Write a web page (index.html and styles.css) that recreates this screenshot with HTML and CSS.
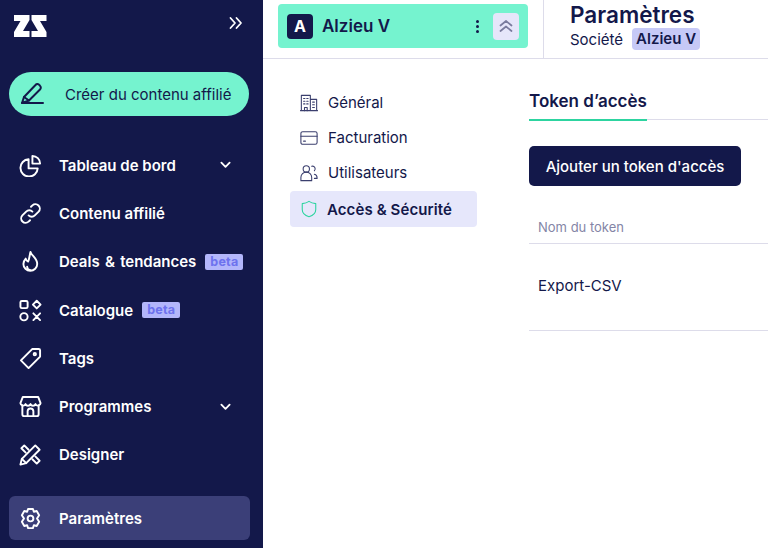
FILE: index.html
```html
<!DOCTYPE html>
<html lang="fr">
<head>
    <meta charset="UTF-8">
    <meta name="viewport" content="width=device-width, initial-scale=1.0">
    <title>Paramètres</title>
    <link rel="stylesheet" href="styles.css">
</head>
<body>
    <div class="app">
        <aside class="sidebar">
            <div class="sidebar-top">
                <svg class="logo" width="33" height="22" viewBox="0 0 33 22" fill="#fff">
                    <polygon points="0,0 15.500,0 15.500,5 9,16 15.500,16 15.500,22 0,22 0,17 6.500,6 0,6"/>
                    <polygon points="17.500,0 32.500,0 32.500,6 26,6 32.500,17 32.500,22 17.500,22 17.500,16 24,16 17.500,5"/>
                </svg>
                <svg class="collapse" width="14" height="14" viewBox="0 0 14 14" fill="none" stroke="#fff" stroke-width="1.800" stroke-linecap="round" stroke-linejoin="round">
                    <path d="M1.500 2l4.500 5-4.500 5M7.500 2l4.500 5-4.500 5"/>
                </svg>
            </div>
            <a class="create-btn">
                <svg width="24" height="24" viewBox="0 0 24 24" fill="none" stroke="#13184a" stroke-width="2" stroke-linecap="round" stroke-linejoin="round">
                    <path d="M2 21l2-6L15.500 3a2.500 2.500 0 0 1 4 0.200l.6.700a2.500 2.500 0 0 1 -.1 3.600L9 18.500z"/>
                    <path d="M4 15l5 3.500M2 21h21"/>
                </svg>
                <span>Créer du contenu affilié</span>
            </a>
            <nav class="nav">
                <a class="nav-item">
                    <svg class="nav-icon" viewBox="0 0 24 24"><path d="M10 5.500a9 9 0 1 0 9.500 9.500H10z"/><path d="M14 2a8 8 0 0 1 8 8h-8z"/></svg>
                    <span>Tableau de bord</span>
                    <svg class="chevron" viewBox="0 0 12 8"><path d="M1.500 1.500L6 6l4.500-4.500"/></svg>
                </a>
                <a class="nav-item">
                    <svg class="nav-icon" viewBox="0 0 24 24"><path d="M10 14a4.500 4.500 0 0 0 6.500 0l4-4a4.600 4.600 0 0 0-6.500-6.500l-1.500 1.500"/><path d="M14 10a4.500 4.500 0 0 0-6.500 0l-4 4a4.600 4.600 0 0 0 6.500 6.500l1.500-1.500"/></svg>
                    <span>Contenu affilié</span>
                </a>
                <a class="nav-item">
                    <svg class="nav-icon" viewBox="0 0 24 24"><path d="M12 2c1 4 7 6.500 7 12.500a7.200 7.200 0 0 1-14.400 0c0-2.500 1-4 2.400-5.500.3 1.500 1 2.500 2.500 3C11 9 11 5 12 2z"/><path d="M12 21c-2 0-3.500-1.500-3.500-3.500"/></svg>
                    <span class="nav-label-wide">Deals &amp; tendances</span>
                    <span class="beta">beta</span>
                </a>
                <a class="nav-item">
                    <svg class="nav-icon" viewBox="0 0 24 24"><rect x="1.500" y="2" width="7.500" height="7.500" rx="1.500"/><path d="M18.500 1.800l4 4-4 4-4-4z"/><circle cx="5.200" cy="18.500" r="3.800"/><path d="M15 15l7 7M22 15l-7 7"/></svg>
                    <span>Catalogue</span>
                    <span class="beta">beta</span>
                </a>
                <a class="nav-item">
                    <svg class="nav-icon" viewBox="0 0 24 24"><path d="M14 2h6.500A1.500 1.500 0 0 1 22 3.500V10L10 22 2 14z"/><circle cx="16.500" cy="7.500" r="1.200"/></svg>
                    <span>Tags</span>
                </a>
                <a class="nav-item">
                    <svg class="nav-icon" viewBox="0 0 24 24"><path d="M4 2h16l2.500 6.500a2.800 2.800 0 0 1-5.300 1 2.800 2.800 0 0 1-5.200 0 2.800 2.800 0 0 1-5.200 0 2.800 2.800 0 0 1-5.300-1z"/><path d="M3.500 11v9a2 2 0 0 0 2 2h13a2 2 0 0 0 2-2v-9"/><path d="M9 22v-5a3 3 0 0 1 6 0v5"/></svg>
                    <span>Programmes</span>
                    <svg class="chevron" viewBox="0 0 12 8"><path d="M1.500 1.500L6 6l4.500-4.500"/></svg>
                </a>
                <a class="nav-item">
                    <svg class="nav-icon" viewBox="0 0 24 24"><path d="M1.500 22.500l1.500-6L17 2.500l4.500 4.500L7.500 21z"/><path d="M3 16.500L7.500 21"/><path d="M10 7L5.500 2.500l-3 3L7 10M14 17l4.500 4.500 3-3L17 14"/></svg>
                    <span>Designer</span>
                </a>
                <a class="nav-item nav-item-active">
                    <svg class="nav-icon" viewBox="0 0 24 24"><path d="M9.500 2h5l1 3 3-.8 2.500 4.300-2.200 3.500 2.200 3.500-2.500 4.300-3-.8-1 3h-5l-1-3-3 .8L3 15.500 5.200 12 3 8.500l2.500-4.300 3 .8z"/><circle cx="12" cy="12" r="3"/></svg>
                    <span>Paramètres</span>
                </a>
            </nav>
        </aside>

        <div class="main">
            <header class="topbar">
                <div class="workspace">
                    <span class="avatar">A</span>
                    <span class="workspace-name">Alzieu V</span>
                    <span class="kebab"><i></i><i></i><i></i></span>
                    <span class="toggle">
                        <svg width="16" height="16" viewBox="0 0 16 16" fill="none" stroke="#7a7b9e" stroke-width="1.700" stroke-linecap="round" stroke-linejoin="round"><path d="M2.500 7.500L8 3l5.500 4.500M2.500 13L8 8.500l5.500 4.500"/></svg>
                    </span>
                </div>
                <div class="page-head">
                    <h1>Paramètres</h1>
                    <div class="crumb">Société <span class="crumb-tag">Alzieu V</span></div>
                </div>
            </header>

            <div class="content">
                <ul class="side-menu">
                    <li>
                        <svg viewBox="0 0 20 20"><path d="M1.500 18.500V1.500h10v17M11.500 6h7v12.500M.5 18.500h19"/><path d="M4 5h1.500M7.500 5H9M4 8h1.500M7.500 8H9M4 11h1.500M7.500 11H9M14 9h2M14 12h2M14 15h2M5 18.500V15h3v3.500"/></svg>
                        Général
                    </li>
                    <li>
                        <svg viewBox="0 0 20 20"><rect x="1" y="3" width="18" height="14" rx="2"/><path d="M1 8h18M4 13.500h2"/></svg>
                        Facturation
                    </li>
                    <li>
                        <svg viewBox="0 0 20 20"><circle cx="7" cy="5.500" r="3.500"/><path d="M1 18.500v-3.500a6 6 0 0 1 12 0v3.500z"/><path d="M13 2.500a3 3 0 0 1 3 5M16 11.500a4 4 0 0 1 3 4v.5h-3"/></svg>
                        Utilisateurs
                    </li>
                    <li class="side-active">
                        <svg viewBox="0 0 20 20"><path class="shield" d="M10 1.500c2 1.500 4.500 2.300 7.500 2.500v6.500c0 4-3.200 6.800-7.500 8-4.300-1.200-7.500-4-7.500-8V4c3-.2 5.500-1 7.500-2.500z"/></svg>
                        Accès &amp; Sécurité
                    </li>
                </ul>
                <section class="panel">
                    <div class="tabs"><span class="tab">Token d’accès</span></div>
                    <button class="add-btn">Ajouter un token d'accès</button>
                    <div class="table-head">Nom du token</div>
                    <div class="table-row">Export-CSV</div>
                </section>
            </div>
        </div>
    </div>
</body>
</html>
```
FILE: styles.css
```css
* {
    box-sizing: border-box;
}
html, body {
    height: 100%;
}
body {
    font-family: Inter, "Noto Sans", sans-serif;
    margin: 0;
    overflow: hidden;
    background: white;
    color: #13184a;
}
.app {
    display: flex;
    height: 548px;
}
.sidebar {
    width: 263px;
    flex-shrink: 0;
    background: #13184a;
    color: white;
    padding: 15px 14px 8px 9px;
}
.sidebar-top {
    display: flex;
    justify-content: space-between;
    align-items: flex-start;
    height: 57px;
    padding: 0 6px 0 5px;
}
.logo {
    display: block;
}
.collapse {
    margin-top: 1px;
}
.create-btn {
    display: flex;
    align-items: center;
    gap: 21px;
    width: 240px;
    height: 44px;
    padding-left: 11px;
    border-radius: 22px;
    background: #75f3cf;
    color: #13184a;
    font-size: 15px;
}
.nav {
    margin-top: 25px;
}
.nav-item {
    display: flex;
    align-items: center;
    height: 48.300px;
    padding-left: 10px;
    font-size: 15px;
    font-weight: 600;
}
.nav-icon {
    width: 23px;
    height: 23px;
    margin-right: 17px;
    fill: none;
    stroke: white;
    stroke-width: 2;
    stroke-linecap: round;
    stroke-linejoin: round;
    flex-shrink: 0;
}
.nav-label-wide {
    word-spacing: 1.500px;
}
.chevron {
    width: 11px;
    height: 8px;
    margin-left: auto;
    margin-right: 18px;
    fill: none;
    stroke: white;
    stroke-width: 2;
    stroke-linecap: round;
    stroke-linejoin: round;
}
.beta {
    margin-left: 9px;
    padding: 0 5px;
    height: 16px;
    line-height: 15px;
    border-radius: 2px;
    background: #b3b6fb;
    color: #6d72ee;
    font-size: 12.500px;
    font-weight: 700;
    letter-spacing: 0.2px;
}
.nav-item-active {
    width: 241px;
    height: 44px;
    margin-top: 17px;
    border-radius: 6px;
    background: #3b3f78;
}
.main {
    flex: 1;
    min-width: 0;
}
.topbar {
    display: flex;
    height: 59px;
    border-bottom: 1px solid #dddcea;
}
.workspace {
    display: flex;
    align-items: center;
    width: 250px;
    height: 44px;
    margin: 4px 15px 0;
    padding: 0 9px;
    border-radius: 4px;
    background: #75f3cf;
}
.avatar {
    width: 26px;
    height: 25px;
    border-radius: 4px;
    background: #13184a;
    color: white;
    font-size: 16px;
    font-weight: 700;
    text-align: center;
    line-height: 25px;
}
.workspace-name {
    margin-left: 9px;
    font-size: 17px;
    font-weight: 600;
}
.kebab {
    display: flex;
    flex-direction: column;
    gap: 2px;
    margin-left: auto;
    margin-right: 14px;
}
.kebab i {
    width: 3px;
    height: 3px;
    border-radius: 50%;
    background: #13184a;
}
.toggle {
    display: flex;
    align-items: center;
    justify-content: center;
    width: 26px;
    height: 27px;
    border-radius: 4px;
    background: #e6e6fa;
}
.page-head {
    flex: 1;
    padding: 1px 0 0 26px;
    border-left: 1px solid #dddcea;
}
h1 {
    margin: 0;
    font-size: 22.500px;
    font-weight: 600;
    line-height: 27px;
}
.crumb {
    display: flex;
    align-items: center;
    gap: 9px;
    font-size: 15px;
}
.crumb-tag {
    height: 22px;
    padding: 0 4px;
    border-radius: 4px;
    background: #c6c9f7;
    font-weight: 600;
    line-height: 22px;
}
.content {
    display: flex;
}
.side-menu {
    width: 187px;
    margin: 26px 0 0 27px;
    padding: 0;
    list-style: none;
    flex-shrink: 0;
}
.side-menu li {
    display: flex;
    align-items: center;
    gap: 10px;
    height: 35px;
    padding-left: 10px;
    font-size: 15px;
}
.side-menu svg {
    width: 18px;
    height: 18px;
    fill: none;
    stroke: #3b3f6e;
    stroke-width: 1.200;
    stroke-linejoin: round;
    stroke-linecap: round;
}
.side-menu .side-active {
    height: 36px;
    margin-top: 1px;
    gap: 9px;
    border-radius: 4px;
    background: #e6e7fb;
    font-weight: 600;
    letter-spacing: 0.1px;
}
.side-menu .shield {
    stroke: #2dd4a0;
}
.panel {
    flex: 1;
    min-width: 0;
    margin: 31px 0 0 52px;
}
.tabs {
    height: 30px;
    border-bottom: 1px solid #dddcea;
}
.tab {
    display: inline-block;
    height: 31px;
    border-bottom: 2px solid #2dd4a0;
    font-size: 17px;
    font-weight: 600;
    line-height: 23px;
}
.add-btn {
    display: block;
    width: 212px;
    height: 40px;
    margin-top: 26px;
    border: 0;
    border-radius: 5px;
    background: #13184a;
    color: white;
    font-family: inherit;
    font-size: 15px;
    font-weight: 500;
}
.table-head {
    height: 40px;
    margin-top: 18px;
    padding: 14px 0 0 9px;
    border-bottom: 1px solid #dddcea;
    color: #8485a6;
    font-size: 13px;
    line-height: 18px;
}
.table-row {
    height: 87px;
    padding-left: 9px;
    border-bottom: 1px solid #dddcea;
    font-size: 15px;
    line-height: 83px;
}
```
